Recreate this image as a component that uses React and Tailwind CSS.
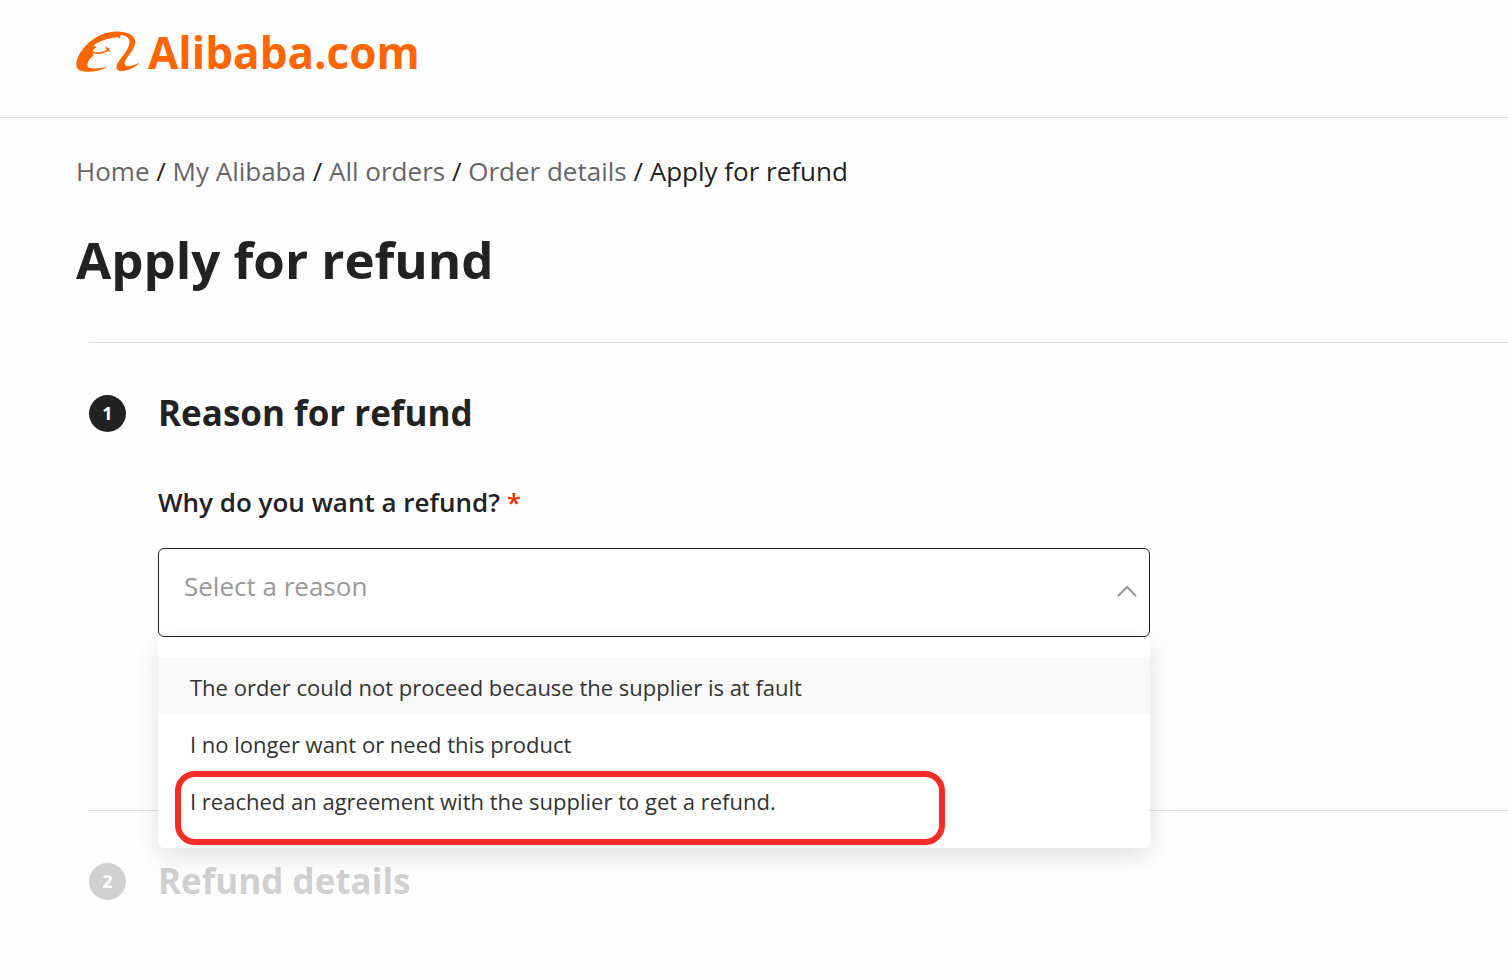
import React, { useState } from 'react';

const CRUMBS = ['Home', 'My Alibaba', 'All orders', 'Order details'];

const REASONS = [
  { value: 'supplier-fault', label: 'The order could not proceed because the supplier is at fault' },
  { value: 'not-needed', label: 'I no longer want or need this product' },
  { value: 'agreement', label: 'I reached an agreement with the supplier to get a refund.', marked: true },
];

function LogoMark() {
  return (
    <svg viewBox="18 34 192 126" className="w-16 h-[42px] flex-shrink-0" fill="#ff6600" aria-hidden="true">
      {/* Head and left stroke */}
      <path d="M151 46 C153 49 150 52 150 57 C148 54 144 52 139 53 C112 57 88 65 71 77 C72 80 76 81 80 82 C76 86 68 90 67 96 C68 103 72 105 69 109 C58 118 51 129 52 138 C55 150 84 147 113 141 C98 151 70 157 47 156 C30 155 19 149 19 136 C19 105 50 64 94 45 C112 38 130 35 149 36 C176 37 197 49 196 68 C195 91 168 112 164 130 C162 145 184 141 208 129 C197 143 175 153 156 154 C142 154 138 149 140 139 C144 120 173 98 178 73 C181 57 171 47 151 46 Z" />
      {/* Smile */}
      <path
        d="M66 97 C82 103 104 101 116 88 M109 84 C113 86 117 90 118 94"
        fill="none"
        stroke="#ff6600"
        strokeWidth="5"
        strokeLinecap="round"
      />
    </svg>
  );
}

function StepHeading({ number, title, disabled }) {
  return (
    <div className={`flex items-center gap-8 ${disabled ? 'text-[#d0d0d0]' : 'text-[#222222]'}`}>
      <span
        className={`flex w-[37px] h-[37px] flex-shrink-0 items-center justify-center rounded-full ${
          disabled ? 'bg-[#d0d0d0]' : 'bg-[#222222]'
        }`}
      >
        <span className="text-lg leading-6 font-bold text-white">{number}</span>
      </span>
      <h2 className="text-[35px] leading-[48px] font-bold">{title}</h2>
    </div>
  );
}

function ReasonSelect() {
  const [open, setOpen] = useState(true);
  const [reason, setReason] = useState('');

  const pick = (value) => {
    setReason(value);
    setOpen(false);
  };

  return (
    <div className="relative z-10 mt-7 w-full max-w-[992px]">
      <select
        id="reason"
        required
        value={reason}
        onChange={(e) => pick(e.target.value)}
        onMouseDown={(e) => {
          // the custom list below replaces the native popup
          e.preventDefault();
          setOpen(!open);
        }}
        className={`block h-[89px] w-full appearance-none rounded-md border border-[#222222] bg-white pr-14 pb-3 pl-[25px] text-[26px] outline-none ${
          reason ? 'text-[#222222]' : 'text-[#999999]'
        }`}
      >
        <option value="">Select a reason</option>
        {REASONS.map((r) => (
          <option key={r.value} value={r.value}>
            {r.label}
          </option>
        ))}
      </select>
      <svg
        viewBox="0 0 20 12"
        className={`pointer-events-none absolute top-[37px] right-[13px] w-5 h-3 ${open ? '' : 'rotate-180'}`}
        fill="none"
        stroke="#999999"
        strokeWidth="2"
        aria-hidden="true"
      >
        <path d="M1 11 L10 2 L19 11" />
      </svg>

      {open && (
        <ul className="absolute top-full left-0 w-full rounded-b-md bg-white py-5 shadow-[0_8px_24px_rgba(0,0,0,0.12)]">
          {REASONS.map((r, i) => (
            <li key={r.value} className="relative">
              <button
                type="button"
                onClick={() => pick(r.value)}
                className={`block w-full px-8 pt-[14px] pb-[10px] text-left text-[22px] leading-[33px] text-[#333333] hover:bg-[#f7f7f7] ${
                  i === 0 ? 'bg-[#f9f9f9]' : ''
                }`}
              >
                {r.label}
              </button>
              {r.marked && (
                <span className="pointer-events-none absolute top-0 left-[17px] h-[74px] w-[770px] max-w-full rounded-[20px] border-6 border-[#f52b25]" />
              )}
            </li>
          ))}
        </ul>
      )}
    </div>
  );
}

export default function App() {
  return (
    <div className="min-h-screen bg-[#fefefe] font-['Open_Sans',sans-serif] text-[#222222]">
      <header className="border-b border-[#dddddd] pt-[31px] pb-11 pl-[76px]">
        <a href="#" className="inline-flex h-[42px] items-center gap-2 align-top">
          <LogoMark />
          <span className="text-[44px] leading-[42px] font-bold text-[#ff6600]">Alibaba.com</span>
        </a>
      </header>

      <main className="pt-[35px] pb-12 pl-[76px]">
        <nav aria-label="Breadcrumb">
          <ol className="flex flex-wrap text-[26px] leading-9">
            {CRUMBS.map((crumb) => (
              <li key={crumb} className="whitespace-pre">
                <a href="#" className="text-[#666666]">
                  {crumb}
                </a>
                {' / '}
              </li>
            ))}
            <li aria-current="page">Apply for refund</li>
          </ol>
        </nav>

        <h1 className="mt-[35px] text-[51px] leading-[70px] font-bold">Apply for refund</h1>

        <section className="mt-12 ml-[13px] border-t border-[#dddddd] pt-[46px] pb-[173px]">
          <StepHeading number={1} title="Reason for refund" />
          <div className="mt-[47px] pr-6 pl-[69px]">
            <label htmlFor="reason" className="block text-[26px] leading-9 font-semibold">
              Why do you want a refund? <span className="text-[#ff3300]">*</span>
            </label>
            <ReasonSelect />
          </div>
        </section>

        <section className="ml-[13px] border-t border-[#dddddd] pt-[46px]">
          <StepHeading number={2} title="Refund details" disabled />
        </section>
      </main>
    </div>
  );
}
